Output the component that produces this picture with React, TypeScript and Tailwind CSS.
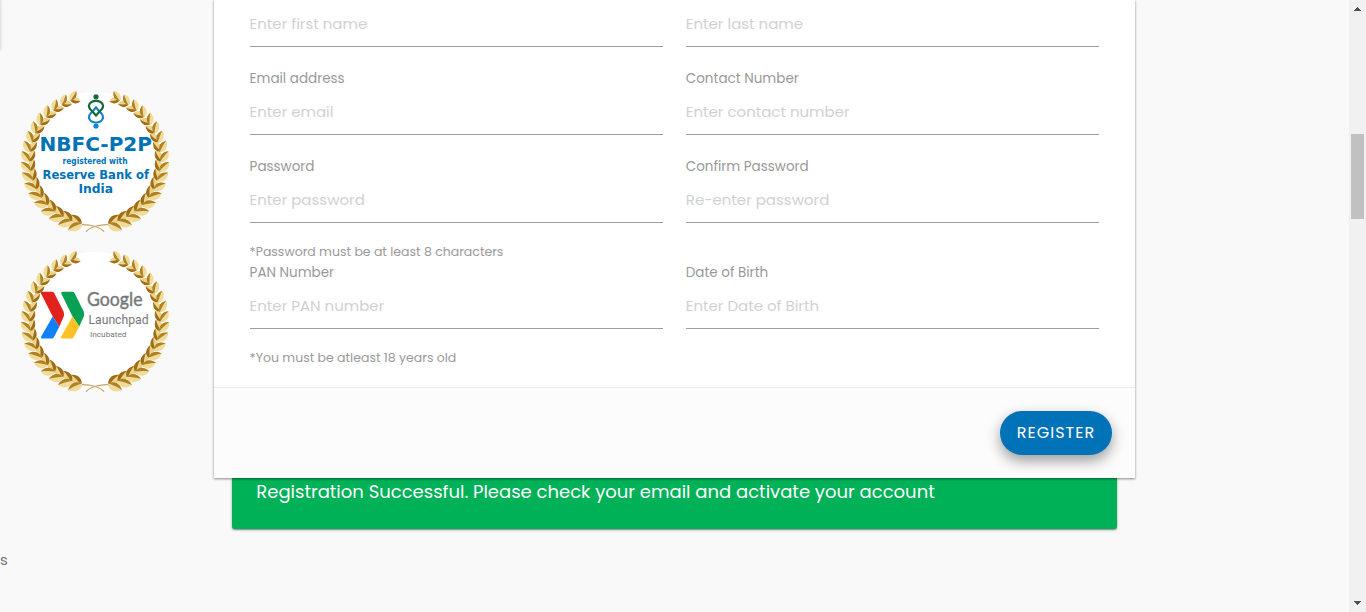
import React from "react";

const fontStack = "font-[Poppins,Inter,sans-serif]";

function Branch() {
  const count = 18;
  const leaves = [];
  for (let i = 0; i < count; i++) {
    const t = i / (count - 1);
    const deg = 13 + t * 146;
    const a = (deg * Math.PI) / 180;
    const x = 75 - 66.5 * Math.sin(a);
    const y = 70.5 + 65.5 * Math.cos(a);
    // The branch grows clockwise from the bottom centre.
    const heading = 180 + deg;
    const s = 1.2 - 0.32 * t;
    leaves.push(
      <g key={i} transform={`translate(${x.toFixed(2)} ${y.toFixed(2)}) rotate(${heading}) scale(${s.toFixed(2)})`}>
        <g transform="rotate(38)">
          <path d="M-2 0C0-4.500 7-5.500 11-1C7 4 2 4-2 0Z" fill="#ecd387" />
          <path d="M-2 0C3 0.500 7 0.500 11-1C7 4.500 2 4.500-2 0Z" fill="#9c6d1a" />
        </g>
        <g transform="rotate(-38)">
          <path d="M-2 0C0-4.500 7-5.500 11 0C7 4 2 4-2 0Z" fill="#f0dc96" />
          <path d="M-2 0C3 0.500 7 0.500 11 0C7 4.500 2 4.500-2 0Z" fill="#b08026" />
        </g>
      </g>
    );
  }
  return (
    <g>
      <path d="M84 141.500C77 135 68 135 58 134" fill="none" stroke="#c7a36a" strokeWidth="1.1" />
      {leaves}
    </g>
  );
}

function Badge({ children, label }: { children: React.ReactNode; label: string }) {
  return (
    <svg width="150" height="144" viewBox="0 0 150 144" role="img" aria-label={label} className="block overflow-visible">
      <circle cx="75" cy="71.500" r="69.500" fill="#fff" />
      <Branch />
      <g transform="translate(150 0) scale(-1 1)">
        <Branch />
      </g>
      {children}
    </svg>
  );
}

function NbfcBadge() {
  return (
    <Badge label="NBFC-P2P">
      <circle cx="76" cy="6.800" r="2.600" fill="#17693c" />
      <circle cx="76" cy="36" r="2.600" fill="#1482c8" />
      <path d="M76 17.500L72 22C66 27 70 32.500 76 32.500C82 32.500 86 27 80 22Z" fill="none" stroke="#1482c8" strokeWidth="2.200" />
      <path d="M76 25.500L72 21C66 16 70 10.800 76 10.800C82 10.800 86 16 80 21Z" fill="none" stroke="#17693c" strokeWidth="2.200" />
      <g fill="#0072b8" fontFamily="DejaVu Sans, sans-serif" fontWeight="700">
        <text x="19.5" y="60.500" fontSize="20" textLength="112.5" lengthAdjust="spacingAndGlyphs">NBFC-P2P</text>
        <text x="42.5" y="73.500" fontSize="8.500" textLength="65" lengthAdjust="spacingAndGlyphs">registered with</text>
        <text x="22.5" y="88.500" fontSize="12" textLength="106.5" lengthAdjust="spacingAndGlyphs">Reserve Bank of</text>
        <text x="58.5" y="103" fontSize="12" textLength="34.5" lengthAdjust="spacingAndGlyphs">India</text>
      </g>
    </Badge>
  );
}

function LaunchpadBadge() {
  return (
    <Badge label="Google Launchpad">
      <path d="M22 41.700H32Q33.500 41.700 34.200 43L43.500 61.500Q44.700 64 43.700 66.500L39.300 76.700L32.700 66.500L21 43.500Q20.500 41.700 22 41.700Z" fill="#e2231d" />
      <path d="M32.700 66.500L39.300 76.700L34 87Q33.300 88.500 31.700 88.500H22.500Q20.300 88.500 21.200 86.500Z" fill="#0f80f5" />
      <path d="M42.500 41.700H52.300Q53.800 41.700 54.500 43L63.700 61.500Q64.700 64 63.700 66.500L59.300 76.500L52.300 66L41.300 43.500Q40.800 41.700 42.500 41.700Z" fill="#08a052" />
      <path d="M52.500 66.500L59.300 76.500L53.800 87Q53 88.500 51.500 88.500H42.500Q40.300 88.500 41.200 86.500Z" fill="#fdc326" />
      <g fill="#757779">
        <text x="67" y="56" fontSize="19" fontFamily="Lato, sans-serif" textLength="55.5" lengthAdjust="spacingAndGlyphs" stroke="#757779" strokeWidth="0.4">Google</text>
        <text x="68.5" y="74" fontSize="13.500" fontFamily="Roboto, sans-serif" textLength="60" lengthAdjust="spacingAndGlyphs">Launchpad</text>
        <text x="70" y="86.500" fontSize="8" fontFamily="Roboto, sans-serif" textLength="36.5" lengthAdjust="spacingAndGlyphs">Incubated</text>
      </g>
    </Badge>
  );
}

function Field({ label, placeholder, note }: { label?: string; placeholder: string; note?: string }) {
  return (
    <div className="flex flex-col">
      {label && <label className="h-5 text-[13.5px] leading-[21px] text-[#999]">{label}</label>}
      <input
        placeholder={placeholder}
        className="h-[47px] w-full rounded-none border-b border-[#9e9e9e] bg-transparent p-0 text-[15px] outline-none placeholder:text-[#d1d1d1]"
      />
      {note && <p className="mt-[19px] h-5 text-[12.5px] leading-5 text-[#999]">{note}</p>}
    </div>
  );
}

function Row({ children, className = "" }: { children: React.ReactNode; className?: string }) {
  return <div className={`grid grid-cols-2 gap-[23px] ${className}`}>{children}</div>;
}

function Scrollbar() {
  return (
    <div className="flex w-[17px] shrink-0 flex-col items-center bg-[#f1f1f1]">
      <svg width="7" height="4" viewBox="0 0 7 4" className="mt-[7px]" shapeRendering="crispEdges">
        <path d="M3 0h1v1h1v1h1v1h1v1H0V3h1V2h1V1h1z" fill="#505050" />
      </svg>
      <div className="mt-[123px] h-[85px] w-[13px] bg-[#c1c1c1]" />
      <svg width="7" height="4" viewBox="0 0 7 4" className="mt-auto mb-[7px]" shapeRendering="crispEdges">
        <path d="M3 4h1V3h1V2h1V1h1V0H0v1h1v1h1v1h1z" fill="#505050" />
      </svg>
    </div>
  );
}

export default function App() {
  return (
    <div className={`flex h-[612px] w-full overflow-hidden bg-[#f9f9f9] ${fontStack}`}>
      <aside className="flex w-[214.4px] shrink-0 flex-col">
        <div className="h-[50px] w-px bg-[#e4e4e4] shadow-[0_0_3px_rgba(0,0,0,0.2)]" />
        <div className="mt-[40px] ml-5 flex flex-col gap-4">
          <NbfcBadge />
          <LaunchpadBadge />
        </div>
        <p className="mt-[156px] h-5 text-[15px] leading-5 text-[#777]">s</p>
      </aside>
      <main className="w-[920.2px] shrink-0">
        <form className="relative z-10 h-[478px] bg-white shadow-[0_1px_3px_rgba(0,0,0,0.2),0_1px_2px_rgba(0,0,0,0.3)]">
          <div className="h-[388px] border-b border-[#ededed] pr-[35.6px] pl-[35.2px]">
            <Row>
              <Field placeholder="Enter first name" />
              <Field placeholder="Enter last name" />
            </Row>
            <Row className="mt-[21px]">
              <Field label="Email address" placeholder="Enter email" />
              <Field label="Contact Number" placeholder="Enter contact number" />
            </Row>
            <Row className="mt-[21px]">
              <Field label="Password" placeholder="Enter password" note="*Password must be at least 8 characters" />
              <Field label="Confirm Password" placeholder="Re-enter password" />
            </Row>
            <Row>
              <Field label="PAN Number" placeholder="Enter PAN number" note="*You must be atleast 18 years old" />
              <Field label="Date of Birth" placeholder="Enter Date of Birth" />
            </Row>
          </div>
          <div className="flex h-[90px] items-center justify-end bg-[#fcfcfc] pr-[22.6px]">
            <button
              type="button"
              className="h-11 w-28 rounded-full bg-[#0072b8] text-[16px] tracking-[1px] text-white shadow-[0_6px_14px_rgba(0,0,0,0.38)]"
            >
              REGISTER
            </button>
          </div>
        </form>
        <div className="mr-[17.6px] ml-[17.6px] h-[51px] rounded-b-[3px] bg-[#00b157] pl-[24.3px] text-[18px] leading-[27px] text-white shadow-[0_1px_3px_rgba(0,0,0,0.3),0_1px_1px_rgba(0,0,0,0.25)]">
          Registration Successful. Please check your email and activate your account
        </div>
      </main>
      <div className="grow" />
      <Scrollbar />
    </div>
  );
}
